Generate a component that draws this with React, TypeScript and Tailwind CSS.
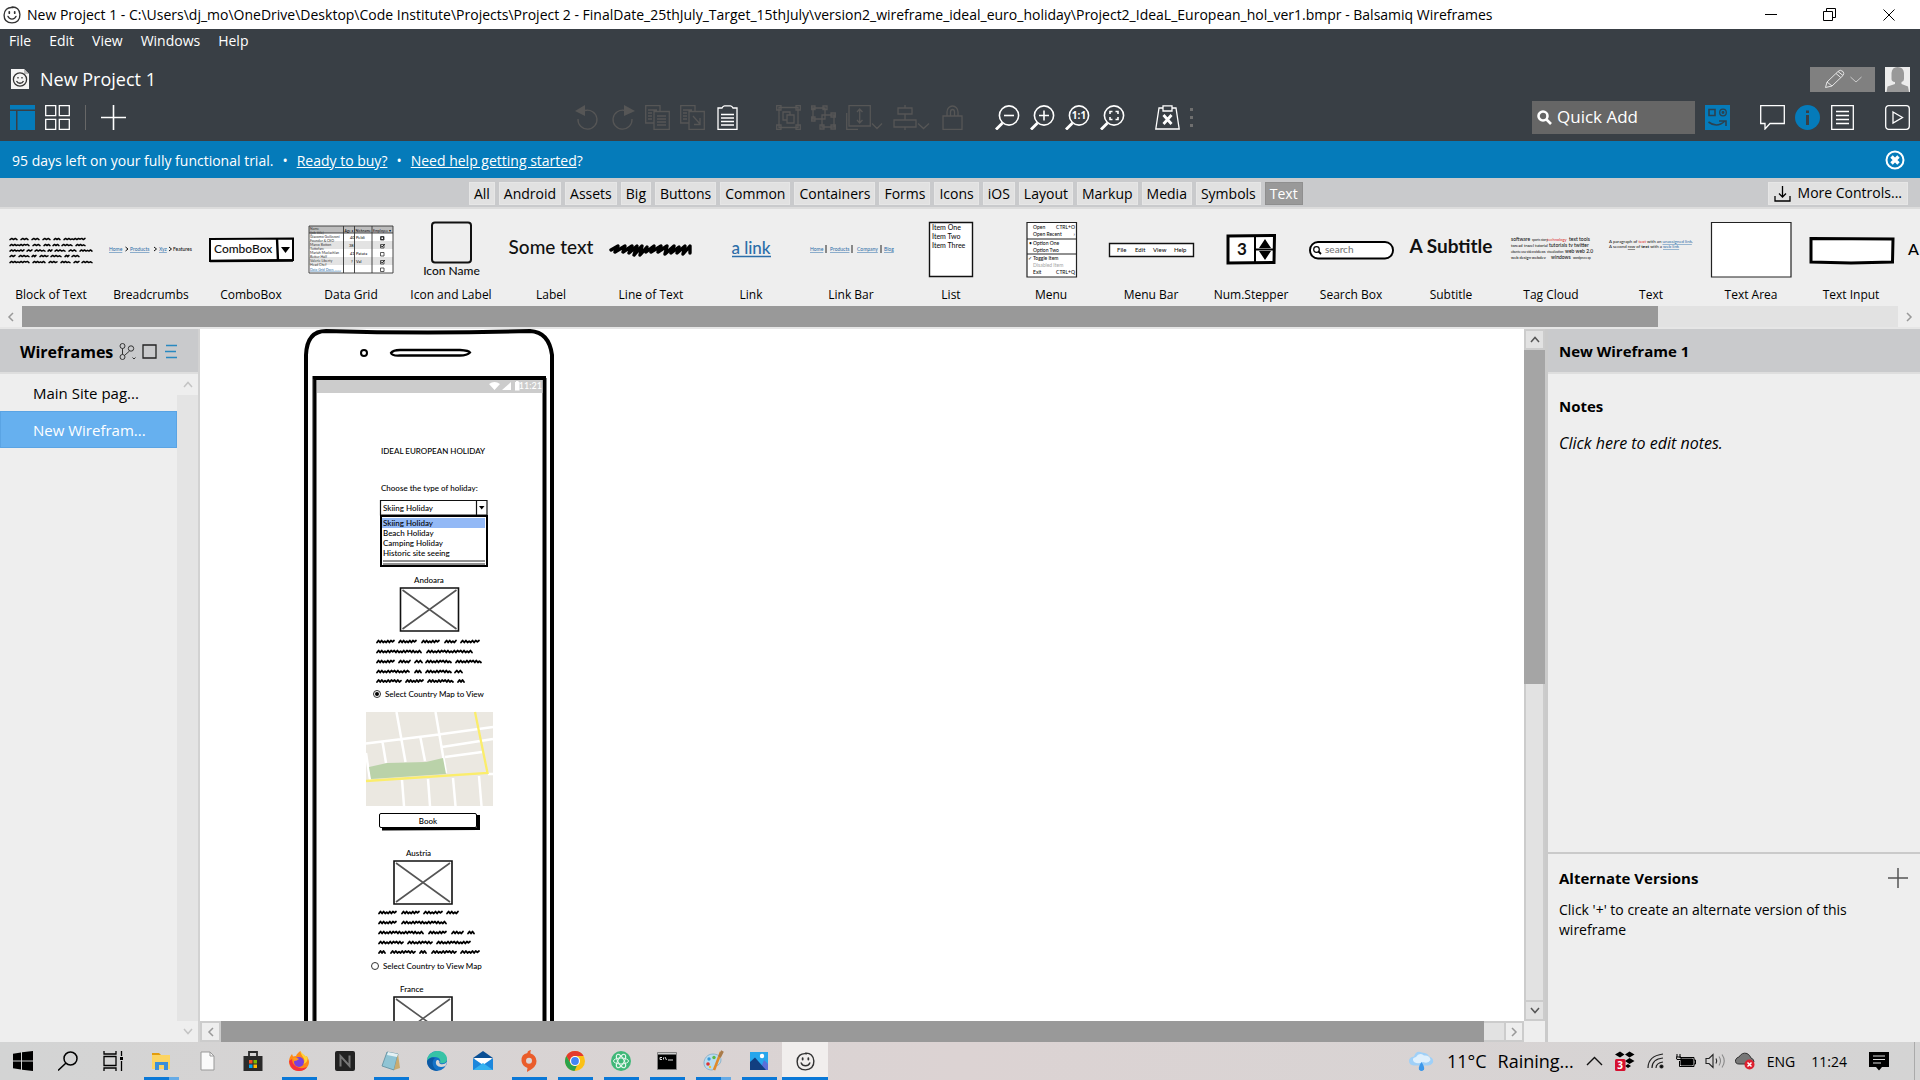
import React from "react";

const SKETCH = "font-['Lato','Liberation_Sans',sans-serif]";

/* ---------- scribbled placeholder text ---------- */

function scribble(x: number, y: number, w: number, a: number) {
  let d = `M${x} ${y + a}`;
  const n = Math.max(3, Math.round(w / 1.6));
  for (let i = 1; i <= n; i++) {
    const k = i % 5 === 0 ? 0.4 : 1;
    d += ` L${(x + (w * i) / n).toFixed(1)} ${(i % 2 ? y - a * k : y + a * k).toFixed(1)}`;
  }
  return d;
}

type Row = { y: number; words: [number, number][] };

function Scribbles({ rows, amp = 1, sw = 1.8 }: { rows: Row[]; amp?: number; sw?: number }) {
  return (
    <g fill="none" stroke="#000" strokeWidth={sw} strokeLinejoin="round" strokeLinecap="round">
      {rows.map((r) =>
        r.words.map(([a, b]) => <path key={`${r.y}-${a}`} d={scribble(a, r.y, b - a, amp)} />),
      )}
    </g>
  );
}

/* ---------- title bar ---------- */

function Smiley({ size = 18, color = "#333" }: { size?: number; color?: string }) {
  return (
    <svg width={size} height={size} viewBox="0 0 20 20" fill="none" stroke={color} strokeWidth="1.5" strokeLinecap="round">
      <path d="M10 1.2C15 .8 18.6 4 18.8 9.500C19 15.500 15.500 18.800 10 18.800C4.500 18.800 1.200 15.500 1.200 10C1.200 4.500 5 1 11 1.800" />
      <path d="M5.500 11.500C7 15.500 13 15.500 14.500 11.500" />
      <path d="M7 6.500V8M13 6.500V8" strokeWidth="1.900" />
    </svg>
  );
}

function TitleBar() {
  return (
    <div className="flex h-[29px] shrink-0 items-center bg-white pl-[3px] text-[14px] text-black">
      <Smiley />
      <span className="ml-[6px] whitespace-nowrap">
        New Project 1 - C:\Users\dj_mo\OneDrive\Desktop\Code Institute\Projects\Project 2 - FinalDate_25thJuly_Target_15thJuly\version2_wireframe_ideal_euro_holiday\Project2_IdeaL_European_hol_ver1.bmpr - Balsamiq Wireframes
      </span>
      <div className="ml-auto flex h-full">
        <button aria-label="Minimise" className="flex w-[58px] items-center justify-center">
          <svg width="12" height="12" stroke="#000"><path d="M0 5.500H12" /></svg>
        </button>
        <button aria-label="Restore" className="flex w-[58px] items-center justify-center">
          <svg width="13" height="13" fill="none" stroke="#000"><path d="M.500 3.500H9.500V12.500H.500ZM3.500 3V.500H12.500V9.500H10" /></svg>
        </button>
        <button aria-label="Close" className="flex w-[62px] items-center justify-center">
          <svg width="12" height="12" stroke="#000"><path d="M.500 .500L11.500 11.500M11.500 .500L.500 11.500" /></svg>
        </button>
      </div>
    </div>
  );
}

/* ---------- dark header ---------- */

function Tool({ label, w = 25, off, children }: { label: string; w?: number; off?: boolean; children: React.ReactNode }) {
  return (
    <button aria-label={label} className={off ? "shrink-0 text-[#565656]" : "shrink-0 text-white"}>
      <svg width={w} height="25" viewBox={`0 0 ${w} 25`} fill="none" stroke="currentColor" strokeWidth="1.300">
        {children}
      </svg>
    </button>
  );
}

function Divider() {
  return <span className="h-[25px] w-px shrink-0 bg-[#676767]" />;
}

function Lens({ children }: { children: React.ReactNode }) {
  return (
    <>
      <circle cx="14" cy="10.500" r="9.600" strokeWidth="1.600" />
      <path d="M7.500 18L1 24.500" strokeWidth="2.800" />
      {children}
    </>
  );
}

function Header() {
  return (
    <header className="shrink-0 bg-[#393f45] text-white">
      <nav className="flex h-[24px] items-center gap-[18px] pb-[2px] pl-[9px] text-[14px]">
        <button>File</button>
        <button>Edit</button>
        <button>View</button>
        <button>Windows</button>
        <button>Help</button>
      </nav>

      <div className="flex h-[50px] items-center pt-[2px] pr-[10px] pl-[11px]">
        <svg width="18" height="20" viewBox="0 0 18 20">
          <path d="M0 0H13L18 5V20H0Z" fill="#f4f4f4" />
          <path d="M13 0V5H18" fill="#bbb" />
          <circle cx="9" cy="10.500" r="6.600" fill="none" stroke="#333" strokeWidth="1.300" />
          <path d="M5.500 12C7 15 11 15 12.500 12M7 8V9.500M11 8V9.500" fill="none" stroke="#333" strokeWidth="1.300" />
        </svg>
        <h1 className="ml-[11px] text-[18px] leading-[24px]">New Project 1</h1>
        <button aria-label="Edit mode" className="ml-auto flex h-[25px] w-[65px] items-center justify-center gap-[5px] bg-[#808080]">
          <svg width="21" height="20" viewBox="0 0 21 20" fill="none" stroke="#e6e6e6">
            <path d="M1.500 18.500L3 13L14 2.500L19 6.500L8 17L1.500 18.500ZM3 13L8 17M12 4.500L16.800 8.500M14 2.500Q16 0 19 2.500Q20.500 4.500 19 6.500" />
          </svg>
          <svg width="12" height="7" viewBox="0 0 12 7" fill="none" stroke="#c9c9c9"><path d="M.500 1L6 6L11.500 1" /></svg>
        </button>
        <svg className="ml-[10px]" width="25" height="25" viewBox="0 0 25 25">
          <path d="M0 0H25V25H0Z" fill="#ececec" />
          <path d="M6.500 12V6Q7 0 12.500 0Q18.500 0 19 6V12Q19 14.500 16.500 15V17L23 19.500L24 25H1.500L2.500 19.500L10 17V15Q6.500 14.500 6.500 12Z" fill="#999" />
        </svg>
      </div>

      <div className="flex h-[38px] items-center pr-[10px] pb-[10px] pl-[10px]">
        <div className="flex flex-1 items-center gap-[10px]">
          <Tool label="Show navigator">
            <path d="M0 0H25V4.500H0ZM0 6H6V25H0ZM7.500 6H25V25H7.500Z" fill="#057bba" stroke="none" />
          </Tool>
          <Tool label="Grid view">
            <path d="M.700 .700H10.700V10.700H.700ZM14.300 .700H24.300V10.700H14.300ZM.700 14.300H10.700V24.300H.700ZM14.300 14.300H24.300V24.300H14.300Z" />
          </Tool>
          <span className="flex items-center gap-[15px] pl-[5px]">
            <Divider />
            <Tool label="Add"><path d="M0 12.500H25M12.500 0V25" strokeWidth="1.600" /></Tool>
          </span>
        </div>

        <div className="mr-[152px] flex items-center gap-[10px]">
          <Tool label="Undo" off>
            <path d="M10 5.500A9.500 9.500 0 1 1 3 14" /><path d="M0 6L10 0V11Z" fill="currentColor" stroke="none" />
          </Tool>
          <Tool label="Redo" off>
            <path d="M15 5.500A9.500 9.500 0 1 0 22 14" /><path d="M25 6L14 0V11Z" fill="currentColor" stroke="none" />
          </Tool>
          <Tool label="Copy" off>
            <path d="M9 18H.700V.700H15V6M9 6.500H24.300V24.300H9ZM3 5H12M3 8H7M3 11H7M3 14H7M12 11H21M12 14H21M12 17H21M12 20H21" />
          </Tool>
          <Tool label="Duplicate" off>
            <path d="M9 18H.700V.700H15V6M9 6.500H24.300V24.300H9ZM3 5H12M3 8H7M3 11H7M3 14H7M13 11L20 19M20 13V19.500H14" />
          </Tool>
          <Tool label="Paste">
            <path d="M3 3H7Q8 .800 9.500 .800H15.500Q17 .800 18 3H22V24.300H3Z" /><path d="M6 9.500H19M6 13H19M6 16.500H19M6 20H19" strokeWidth="1.600" />
          </Tool>
          <span className="px-[8px]"><Divider /></span>
          <Tool label="Group" off>
            <path d="M3 2.500H22V22.500H3ZM.700 .700H5V5H.700ZM20 .700H24.300V5H20ZM.700 20H5V24.300H.700ZM20 20H24.300V24.300H20ZM7 7H14V10H18V18H11V15H7ZM11 15V10H14" />
          </Tool>
          <Tool label="Ungroup" off>
            <path d="M2 3H14V14H2ZM11 10H23V22H11ZM.700 1H4V4.500H.700ZM12 1H16V4.500H12ZM.700 12H4V16H.700ZM20 8H24.300V12H20ZM9 20H13V24H9ZM20 20H24.300V24H20Z" />
          </Tool>
          <Tool label="Arrange" off w={37}>
            <path d="M3 .700H24.300V21H3ZM.700 8V24.300H12M13.700 4V18M11 7L13.700 4L16.500 7M11 15L13.700 18L16.500 15M26 18.500L31 23.500L36 18.500" />
          </Tool>
          <Tool label="Align" off w={37}>
            <path d="M5 3H19V9H5ZM1 15H23V22H1ZM12 0V3M12 9V15M12 22V25M25 18.500L30.500 23.500L36 18.500" />
          </Tool>
          <Tool label="Lock" off>
            <path d="M3 11H22V24.300H3ZM7 11V7A5.500 6 0 0 1 18 7V11M10.500 11V7A2 2.500 0 0 1 14.500 7V11" />
          </Tool>
          <span className="px-[5px]"><Divider /></span>
          <Tool label="Zoom out"><Lens><path d="M9 10.500H19" strokeWidth="1.600" /></Lens></Tool>
          <Tool label="Zoom in"><Lens><path d="M9 10.500H19M14 5.500V15.500" strokeWidth="1.600" /></Lens></Tool>
          <Tool label="Actual size">
            <Lens>
              <text x="14" y="14" textAnchor="middle" className="text-[10px] font-bold" fill="currentColor" stroke="none">1:1</text>
            </Lens>
          </Tool>
          <Tool label="Zoom to fit">
            <Lens><path d="M10 9V6.500H12.500M15.500 6.500H18V9M18 12V14.500H15.500M12.500 14.500H10V12" strokeWidth="1.600" /></Lens>
          </Tool>
          <span className="px-[5px]"><Divider /></span>
          <Tool label="Clear">
            <path d="M8 3H4L.800 24H24.200L21 3H17M8 .800H17V6H8Z" /><path d="M8.500 10L16.500 19M16.500 10L8.500 19" strokeWidth="2.800" />
          </Tool>
          <svg width="3" height="20" fill="#6f6f6f"><path d="M0 1H3V4H0ZM0 9H3V12H0ZM0 17H3V20H0Z" /></svg>
        </div>

        <div className="flex flex-1 items-center justify-end gap-[10px]">
          <label className="flex h-[33px] w-[163px] shrink-0 items-center bg-[#666] pl-[5px]">
            <svg width="15" height="15" viewBox="0 0 15 15" fill="none" stroke="#fff" strokeWidth="2.600">
              <circle cx="6" cy="6" r="4.500" /><path d="M9.500 9.500L14 14" />
            </svg>
            <input aria-label="Quick Add" placeholder="Quick Add" className="ml-[5px] w-[120px] bg-transparent text-[17px] text-white outline-none placeholder:text-white" />
          </label>
          <Tool label="UI library">
            <path d="M0 0H25V25H0Z" fill="#057bba" stroke="none" />
            <g stroke="#2c414f"><path d="M4 4.500H10V10.500H4ZM3.500 17Q12 23.500 20 16M14 16H21V21" strokeWidth="1.600" /><circle cx="18" cy="7.500" r="3.300" /><circle cx="18" cy="7.500" r=".8" /></g>
          </Tool>
          <span className="px-[5px]"><Divider /></span>
          <Tool label="Comments"><path d="M.700 .700H24.300V18.500H10L5 24V18.500H.700Z" /></Tool>
          <Tool label="Properties">
            <circle cx="12.500" cy="12.500" r="12.500" fill="#057bba" stroke="none" />
            <path d="M12.500 10V20M12.500 5.500V8" stroke="#393f45" strokeWidth="3" />
          </Tool>
          <Tool label="Notes"><path d="M1.700 .700H23.300V24.300H1.700ZM6 6.500H19M6 10.500H19M6 14.500H19M6 18.500H19" /></Tool>
          <span className="px-[5px]"><Divider /></span>
          <Tool label="Present"><rect x=".7" y=".7" width="23.600" height="23.600" rx="3" /><path d="M8 7L17.500 12.500L8 18Z" /></Tool>
        </div>
      </div>
    </header>
  );
}

function Banner() {
  return (
    <div className="flex h-[37px] shrink-0 items-center bg-[#057bba] pt-px pr-[15px] pl-[12px] text-[14px] text-white">
      <span>95 days left on your fully functional trial.</span>
      <span className="mx-[9px]">•</span>
      <a href="#buy" className="underline">Ready to buy?</a>
      <span className="mx-[9px]">•</span>
      <a href="#help" className="underline">Need help getting started</a>?
      <button aria-label="Dismiss" className="ml-auto">
        <svg width="20" height="20" viewBox="0 0 20 20" fill="none" stroke="#fff">
          <circle cx="10" cy="10" r="8.500" strokeWidth="2" /><path d="M6.500 6.500L13.500 13.500M13.500 6.500L6.500 13.500" strokeWidth="3.400" />
        </svg>
      </button>
    </div>
  );
}

/* ---------- control gallery ---------- */

const TABS = ["All", "Android", "Assets", "Big", "Buttons", "Common", "Containers", "Forms", "Icons", "iOS", "Layout", "Markup", "Media", "Symbols", "Text"];

function Tabs() {
  return (
    <div className="flex h-[31px] shrink-0 items-center border-b-2 border-[#dcdcdc] bg-[#c9cacc] pt-px pr-[12px] text-[14px] text-black">
      <div className="flex flex-1 justify-center gap-[4px] pl-[4px]">
        {TABS.map((t) => (
          <button
            key={t}
            className={
              t === "Text"
                ? "h-[23px] border border-[#8f8f8f] bg-[#999] px-[4px] leading-[22px] text-white"
                : "h-[23px] border border-[#e6e6e6] bg-[#e1e1e1] px-[4px] leading-[22px]"
            }
          >
            {t}
          </button>
        ))}
      </div>
      <button className="flex h-[23px] items-center gap-[7px] border border-[#e6e6e6] bg-[#e1e1e1] px-[5px] leading-[22px] whitespace-nowrap">
        <svg width="17" height="17" viewBox="0 0 17 17" fill="none" stroke="#000" strokeWidth="1.300">
          <path d="M1 11V16H16V11M8.500 1V11.500M5 8.500L8.500 12L12 8.500" />
        </svg>
        More Controls...
      </button>
    </div>
  );
}

const BLUE = "#2b6da8";

function T({ x, y, s, children, fill = "#111", anchor = "start", bold }: { x: number; y: number; s: number; children: React.ReactNode; fill?: string; anchor?: "start" | "middle" | "end"; bold?: boolean }) {
  return (
    <text x={x} y={y} fontSize={s} fill={fill} textAnchor={anchor} fontWeight={bold ? 700 : 500}>
      {children}
    </text>
  );
}

function Links({ items, y, sep }: { items: [number, string][]; y: number; sep: number[] }) {
  return (
    <>
      {items.map(([x, t]) => (
        <text key={t} x={x} y={y} fontSize="5" fill={BLUE} textDecoration="underline">{t}</text>
      ))}
      <path d={sep.map((x) => `M${x} ${y - 6}V${y + 2}`).join("")} stroke="#222" />
    </>
  );
}

const CONTROLS: { name: string; art: React.ReactNode }[] = [
  {
    name: "Block of Text",
    art: (
      <Scribbles
        sw={1.5}
        amp={0.6}
        rows={[
          { y: 27, words: [[9, 16], [20, 27], [31, 38], [42, 49], [53, 59], [63, 84]] },
          { y: 33, words: [[9, 28], [32, 39], [43, 49], [52, 58], [61, 71], [75, 84]] },
          { y: 38.500, words: [[9, 23], [26, 31], [34, 44], [47, 51], [54, 64], [68, 75], [79, 91]] },
          { y: 44, words: [[9, 14], [18, 28], [31, 35], [39, 47], [50, 60], [64, 68], [71, 78]] },
          { y: 50, words: [[9, 28], [32, 44], [48, 56], [60, 69], [73, 78], [81, 91]] },
        ]}
      />
    ),
  },
  {
    name: "Breadcrumbs",
    art: (
      <>
        <Links y={39} sep={[]} items={[[8, "Home"], [29, "Products"], [58, "Xyz"]]} />
        <T x={72} y={39} s={5}>Features</T>
        <path d="M24.500 35L27 37L24.500 39M53 35L55.500 37L53 39M68 35L70.500 37L68 39" fill="none" stroke="#111" />
      </>
    ),
  },
  {
    name: "ComboBox",
    art: (
      <>
        <path d="M9 27L92 26.500V48L9 49Z" fill="#fff" stroke="#000" strokeWidth="2" />
        <path d="M9 49L92 48.500M76 26.500L77 49" stroke="#000" strokeWidth="2.400" />
        <path d="M80 35H89L84.500 41Z" />
        <T x={13} y={41} s={12}>ComboBox</T>
      </>
    ),
  },
  {
    name: "Data Grid",
    art: (
      <>
        <path d="M8 14H92V61H8Z" fill="#fff" />
        <path d="M8 14H92V21H8ZM8 14H42V21H8Z" fill="#bdbdbd" />
        <path d="M8 29H92V37H8ZM8 45H92V53H8Z" fill="#e3e3e3" />
        <path d="M8 14H92V61H8ZM42.500 14V61M53.500 14V61M71 14V61M8 21H92" fill="none" stroke="#333" strokeWidth=".9" />
        {["Name", "(job title)", "Giacomo Guilizzoni", "Founder & CEO", "Marco Botton", "Tuttofare", "Mariah Maclachlan", "Better Half", "Valerie Liberty", "Head Chef"].map((t, i) => (
          <T key={t} x={9} y={17.500 + i * 4} s={3.500} fill="#444">{t}</T>
        ))}
        <text x="9" y="58.500" fontSize="3.500" fill={BLUE} textDecoration="underline">Data Grid Docs ........</text>
        <T x={43.500} y={19.500} s={3.500}>Age ♦</T>
        <T x={54.500} y={19.500} s={3.500}>Nickname</T>
        <T x={72} y={19.500} s={3.500}>Employee ▾</T>
        <T x={49} y={27} s={4}>40</T><T x={55} y={27} s={4}>Peldi</T>
        <T x={48} y={35} s={4}>38</T>
        <T x={49} y={43} s={4}>41</T><T x={55} y={43} s={4}>Patata</T>
        <T x={50} y={51} s={4}>?</T><T x={55} y={51} s={4}>Val</T>
        <path d="M79.500 24.500H83V28H79.500ZM79.500 32.500H83V36H79.500ZM79.500 40.500H83V44H79.500ZM79.500 48.500H83V52H79.500ZM79.500 56H83V59.500H79.500Z" fill="none" stroke="#333" strokeWidth=".8" />
        <path d="M80 25H82.500V27.500H80ZM80 33.500L81 35L84 32M80 49.500L81 51L84 48" fill="none" stroke="#111" strokeWidth=".8" />
      </>
    ),
  },
  {
    name: "Icon and Label",
    art: (
      <>
        <rect x="31" y="10.500" width="39" height="40" rx="3" fill="none" stroke="#111" strokeWidth="2" />
        <T x={50.500} y={63} s={12} anchor="middle">Icon Name</T>
      </>
    ),
  },
  { name: "Label", art: <T x={50} y={42} s={19} anchor="middle">Some text</T> },
  {
    name: "Line of Text",
    art: (
      <path
        d="M10 38L17 34L14 40L24 34L22 40L31 34L28 41L36 34L33 43L41 34L39 43L46 35L45 40L53 34L50 40L60 34L57 40L66 34L64 42L73 34L70 41L78 35L76 41L84 34L82 42L89 34V41"
        fill="none" stroke="#000" strokeWidth="3.400" strokeLinejoin="round" strokeLinecap="round"
      />
    ),
  },
  {
    name: "Link",
    art: <><T x={50} y={42} s={17} fill={BLUE} anchor="middle">a link</T><path d="M31 44.500H70" stroke={BLUE} strokeWidth="1.500" /></>,
  },
  {
    name: "Link Bar",
    art: <Links y={39} sep={[25, 51, 80]} items={[[9, "Home"], [29, "Products"], [56, "Company"], [83, "Blog"]]} />,
  },
  {
    name: "List",
    art: (
      <>
        <path d="M28.500 10.500H71.500V64.500H28.500Z" fill="#fff" stroke="#111" strokeWidth="1.400" />
        <T x={31} y={17.500} s={7}>Item One</T><T x={31} y={26.500} s={7}>Item Two</T><T x={31} y={35.500} s={7}>Item Three</T>
      </>
    ),
  },
  {
    name: "Menu",
    art: (
      <>
        <path d="M26 10.500H75.500V65H26ZM26 27H75M26 42H75" fill="#fff" stroke="#222" strokeWidth="1.200" />
        <T x={32} y={16.500} s={5}>Open</T><T x={74} y={16.500} s={5} anchor="end">CTRL+O</T>
        <T x={32} y={23.500} s={5}>Open Recent</T><T x={74} y={23.500} s={5} anchor="end">›</T>
        <T x={28} y={32.500} s={5}>•</T><T x={32} y={32.500} s={5}>Option One</T><T x={32} y={39.500} s={5}>Option Two</T>
        <T x={27} y={48} s={5}>✓</T><T x={32} y={48} s={5}>Toggle Item</T><T x={32} y={55} s={5} fill="#aaa">Disabled Item</T>
        <T x={32} y={62} s={5}>Exit</T><T x={74} y={62} s={5} anchor="end">CTRL+Q</T>
      </>
    ),
  },
  {
    name: "Menu Bar",
    art: (
      <>
        <path d="M8.500 31.500H92.500V44.500H8.500Z" fill="#fff" stroke="#111" strokeWidth="1.400" />
        <T x={16} y={40} s={6}>File</T><T x={34} y={40} s={6}>Edit</T><T x={52} y={40} s={6}>View</T><T x={73} y={40} s={6}>Help</T>
      </>
    ),
  },
  {
    name: "Num.Stepper",
    art: (
      <>
        <path d="M27 24L73.500 23.500L73 50.500L27 51Z" fill="#fff" stroke="#000" strokeWidth="3" />
        <path d="M54 24V51M55 37.500H73" stroke="#000" strokeWidth="2" />
        <path d="M58 36L64 27L70 36ZM58 39L64 48L70 39Z" />
        <T x={41} y={43} s={17} anchor="middle" bold>3</T>
      </>
    ),
  },
  {
    name: "Search Box",
    art: (
      <>
        <rect x="9" y="30" width="83" height="16.500" rx="8" fill="#fff" stroke="#000" strokeWidth="1.900" />
        <circle cx="15.500" cy="37.500" r="2.800" fill="none" stroke="#000" strokeWidth="1.200" /><path d="M17.500 39.500L20 42" stroke="#000" strokeWidth="1.800" />
        <T x={24} y={41} s={10} fill="#777">search</T>
      </>
    ),
  },
  { name: "Subtitle", art: <T x={50} y={41} s={19} anchor="middle" bold>A Subtitle</T> },
  {
    name: "Tag Cloud",
    art: (
      <>
        <T x={10} y={29} s={5}>software</T><T x={31} y={29} s={3}>sports story</T><T x={46} y={29} s={4} fill="#d33">technology</T><T x={68} y={29} s={5}>text tools</T>
        <T x={10} y={35} s={4}>toread</T><T x={23} y={35} s={4}>travel tutorial</T><T x={48} y={35} s={5}>tutorials tv twitter</T>
        <T x={10} y={41} s={3}>ubuntu usa video</T><T x={33} y={41} s={4}>videos</T><T x={46} y={41} s={3}>visualization</T><T x={64} y={41} s={5}>web web 2.0</T>
        <T x={10} y={47} s={4}>web design webdev</T><T x={50} y={47} s={5}>windows</T><T x={72} y={47} s={3}>wordpress xp</T>
      </>
    ),
  },
  {
    name: "Text",
    art: (
      <text x="8" y="31" fontSize="4.400" fill="#111">
        A paragraph of <tspan fill="#d22">text</tspan> with an <tspan fill={BLUE} textDecoration="underline">unassigned link</tspan>.
        <tspan x="8" dy="5">A second </tspan><tspan textDecoration="underline">row</tspan> of <tspan fontWeight="700">text</tspan> with a <tspan fill={BLUE} textDecoration="underline">web link</tspan>
      </text>
    ),
  },
  { name: "Text Area", art: <path d="M10.500 10.500H90V65H10.500Z" fill="#fff" stroke="#222" strokeWidth="1.200" /> },
  { name: "Text Input", art: <path d="M10 26.500L92 27L91.500 50L50 51L10 50Z" fill="#fff" stroke="#000" strokeWidth="3" /> },
];

function Gallery() {
  return (
    <div className="shrink-0 bg-[#eee]">
      <div className="flex h-[97px] overflow-hidden pt-[3px] pl-[1px]">
        {CONTROLS.map((c) => (
          <button key={c.name} className="flex w-[100px] shrink-0 flex-col items-center text-[12px] leading-[18px] text-black">
            <svg width="100" height="74" viewBox="0 0 100 74" className={SKETCH}>{c.art}</svg>
            {c.name}
          </button>
        ))}
        <span className={`${SKETCH} mt-[26px] ml-[7px] text-[16px] leading-[22px] font-medium`}>A</span>
      </div>
      <div className="flex h-[21px] bg-[#e2e2e2]">
        <button aria-label="Scroll left" className="flex w-[22px] items-center justify-center bg-[#eee]">
          <Chevron d="M6 1L2 5L6 9" color="#999" />
        </button>
        <span className="w-[85.200%] bg-[#999]" />
        <button aria-label="Scroll right" className="ml-auto flex w-[22px] items-center justify-center bg-[#eee]">
          <Chevron d="M2 1L6 5L2 9" color="#999" />
        </button>
      </div>
      <div className="h-[2px] bg-[#e6e6e6]" />
    </div>
  );
}

function Chevron({ d, color, w = 8, h = 10 }: { d: string; color: string; w?: number; h?: number }) {
  return (
    <svg width={w} height={h} viewBox={`0 0 ${w} ${h}`} fill="none" stroke={color} strokeWidth="1.500"><path d={d} /></svg>
  );
}

/* ---------- left navigator ---------- */

function Navigator() {
  return (
    <aside className="flex w-[200px] shrink-0 flex-col border-r-2 border-[#d2d2d2] bg-[#eee]">
      <div className="flex h-[45px] items-center border-b-2 border-[#dedede] bg-[#c9cacc] pt-[2px] pl-[20px]">
        <h2 className="text-[16px] font-bold text-black">Wireframes</h2>
        <div className="ml-auto flex items-center gap-[6px] pr-[20px]">
          <svg width="17" height="17" viewBox="0 0 17 17" fill="none" stroke="#333">
            <circle cx="3.500" cy="3" r="2.500" /><circle cx="3.500" cy="14" r="2.500" /><circle cx="12" cy="5.500" r="2.700" />
            <path d="M3.500 5.500V11.500M5.500 12.500L10.500 8M13.500 14.500L15 16L16.500 14.500" />
          </svg>
          <svg width="15" height="15" fill="none" stroke="#222" strokeWidth="1.300"><path d="M1 1H14V14H1Z" /></svg>
          <svg className="ml-[2px]" width="13" height="15" stroke="#2889c0" strokeWidth="1.500"><path d="M1 1.500H12M0 7.500H11M1 13.500H12" /></svg>
        </div>
      </div>
      <div className="flex flex-1">
        <div className="flex-1 text-[15px]">
          <button className="flex h-[37px] w-full items-center pt-px pl-[33px] text-black">Main Site pag...</button>
          <button className="flex h-[37px] w-full items-center border border-[#5aa4e4] bg-[#66b0ef] pt-px pl-[32px] text-white">New Wirefram...</button>
        </div>
        <div className="flex w-[21px] flex-col bg-[#e4e4e4]">
          <span className="flex h-[21px] items-center justify-center bg-[#eee]"><Chevron w={10} h={7} d="M1 6L5 1.500L9 6" color="#c4c4c4" /></span>
          <span className="mt-auto flex h-[21px] items-center justify-center bg-[#eee]"><Chevron w={10} h={7} d="M1 1L5 5.500L9 1" color="#c4c4c4" /></span>
        </div>
      </div>
    </aside>
  );
}

/* ---------- phone wireframe on the canvas ---------- */

const ANDORRA: Row[] = [
  { y: 312.500, words: [[73, 90], [95, 112], [118, 135], [141, 152], [157, 175]] },
  { y: 322.500, words: [[73, 117], [123, 168]] },
  { y: 332.500, words: [[73, 90], [95, 106], [111, 118], [122, 147], [152, 177]] },
  { y: 342.500, words: [[73, 105], [111, 117], [122, 147], [151, 158]] },
  { y: 352, words: [[73, 97], [102, 119], [124, 149], [154, 160]] },
];
const AUSTRIA: Row[] = [
  { y: 583.500, words: [[75, 92], [98, 115], [120, 138], [143, 154]] },
  { y: 593.500, words: [[75, 92], [98, 142]] },
  { y: 603.500, words: [[75, 119], [125, 142], [148, 159], [164, 170]] },
  { y: 613.500, words: [[75, 99], [104, 128], [133, 166]] },
  { y: 623, words: [[75, 81], [87, 111], [116, 122], [128, 152], [157, 175]] },
];

function Picture({ x, y }: { x: number; y: number }) {
  return (
    <g fill="none">
      <path d={`M${x} ${y}h58v43h-58Z`} stroke="#111" strokeWidth="1.600" />
      <path d={`M${x + 2} ${y + 2}l54 39M${x + 56} ${y + 2}l-54 39`} stroke="#555" strokeWidth="1.600" />
    </g>
  );
}

function Phone() {
  return (
    <div className={`${SKETCH} absolute top-0 left-[104px] h-[740px] w-[250px] text-[8px] leading-[10px] font-medium whitespace-nowrap text-black`}>
      <svg className="absolute inset-0" width="250" height="740" viewBox="0 0 250 740" fill="none">
        <path d="M2 760V26Q3 2 22 2Q124 5 226 2Q245 3 248 26V760" stroke="#000" strokeWidth="4" />
        <path d="M10.500 49V760M240.500 49V760M8.500 49H242" stroke="#000" strokeWidth="4" />
        <path d="M8.700 50V760" stroke="#888" />
        <circle cx="60" cy="24" r="3" stroke="#000" strokeWidth="2" />
        <path d="M87 24Q89 21 96 21H156Q165 21.500 166 23.500Q163 26.500 156 26.500H96Q88 27 87 24Z" stroke="#000" strokeWidth="2.300" />
        <path d="M13 51H238.500V64H13Z" fill="#ccc" />
        <path d="M185 55Q190.500 51 196 55L190.500 61ZM198 61L207 53V61ZM211 53H212V52H214.500V53H215.500V61.500H211Z" fill="#fff" />

        <path d="M76.500 171.500H183V186H76.500ZM172.500 171.500V186" fill="#fff" stroke="#111" strokeWidth="1.200" />
        <path d="M175 177H180.500L177.700 180.500Z" fill="#000" />
        <path d="M77 187H183V237H77Z" fill="#fff" stroke="#000" strokeWidth="2" />
        <path d="M78 189H181V199H78Z" fill="#93b9f6" />
        <path d="M79 232H181M79 235H181" stroke="#222" />

        <Picture x={96.500} y={259} />
        <Picture x={90} y={532} />
        <Picture x={90} y={668} />
        <Scribbles rows={ANDORRA} />
        <Scribbles rows={AUSTRIA} />

        <path d="M62 383H189V477H62Z" fill="#ebe8e1" />
        <g stroke="#fff" strokeWidth="2.500">
          <path d="M62 414.500L131 406L189 398M92.500 383L101.500 433M131.500 383L142 444M78.500 413L82 434M116.500 409L121 432M138 418L189 410M141 428L178 423M184 445H189M62 424L66 451M98 451L100 477M124 450L126 477M149 449L151.500 477M175 447L177.500 477" />
        </g>
        <path d="M65 438L83 434L122 433L139 429L142 445L67 450Z" fill="#bad2a9" />
        <path d="M62 452L183.500 444L171 383" stroke="#fbed6b" strokeWidth="2.300" />
        <path d="M78 500L174.500 499.500V486" stroke="#000" strokeWidth="3" />
      </svg>

      <span className="absolute top-[51px] right-[12px] text-[9px] leading-[12px] text-white">11:21</span>
      <p className="absolute top-[117px] left-[77px]">IDEAL EUROPEAN HOLIDAY</p>
      <label htmlFor="holiday" className="absolute top-[154px] left-[77px]">Choose the type of holiday:</label>
      <select id="holiday" className="absolute top-[173px] left-[79px] h-[12px] w-[92px] appearance-none leading-[10px]">
        <option>Skiing Holiday</option>
      </select>
      <ul className="absolute top-[189px] left-[79px]">
        <li>Skiing Holiday</li>
        <li>Beach Holiday</li>
        <li>Camping Holiday</li>
        <li>Historic site seeing</li>
      </ul>
      <p className="absolute top-[246px] left-[110px]">Andoara</p>
      <label className="absolute top-[360px] left-[69px] flex items-center gap-[4px]">
        <input type="radio" name="map" defaultChecked className="size-[8px] appearance-none rounded-full border border-[#333] bg-white p-px checked:bg-black checked:bg-clip-content" />
        Select Country Map to View
      </label>
      <button className="absolute top-[484px] left-[75px] h-[15px] w-[98px] rounded-[2px] border border-black bg-white">Book</button>
      <p className="absolute top-[519px] left-[102px]">Austria</p>
      <label className="absolute top-[632px] left-[67px] flex items-center gap-[4px]">
        <input type="radio" name="map" className="size-[8px] appearance-none rounded-full border border-[#333] bg-white" />
        Select Country to View Map
      </label>
      <p className="absolute top-[655px] left-[96px]">France</p>
    </div>
  );
}

function Canvas() {
  return (
    <main className="flex min-w-0 flex-1 flex-col bg-[#eee]">
      <div className="flex min-h-0 flex-1">
        <div className="relative flex-1 overflow-hidden bg-white"><Phone /></div>
        <div className="flex w-[21px] flex-col bg-[#e2e2e2]">
          <button aria-label="Scroll up" className="flex h-[21px] items-center justify-center border-2 border-[#ccc]"><Chevron w={10} h={7} d="M1 6L5 1.500L9 6" color="#555" /></button>
          <span className="h-[48.300%] bg-[#a5a5a5]" />
          <span className="flex-1 border-x-2 border-[#ccc]" />
          <button aria-label="Scroll down" className="flex h-[21px] items-center justify-center border-2 border-[#ccc]"><Chevron w={10} h={7} d="M1 1L5 5.500L9 1" color="#555" /></button>
        </div>
      </div>
      <div className="flex h-[21px] shrink-0 pr-[21px]">
        <button aria-label="Scroll left" className="flex w-[21px] items-center justify-center border-2 border-[#ccc]"><Chevron d="M6 1L2 5L6 9" color="#999" /></button>
        <span className="flex-1 bg-[#999]" />
        <span className="w-[20px] border-y-2 border-[#ccc] bg-[#e2e2e2]" />
        <button aria-label="Scroll right" className="flex w-[20px] items-center justify-center border-2 border-[#ccc]"><Chevron d="M2 1L6 5L2 9" color="#999" /></button>
      </div>
    </main>
  );
}

function Inspector() {
  return (
    <aside className="flex w-[375px] shrink-0 flex-col border-l-3 border-[#cacaca] bg-[#eee] text-black">
      <div className="flex h-[45px] items-center border-b-2 border-[#dedede] bg-[#c9cacc] pt-[2px] pl-[11px]">
        <h2 className="text-[15px] font-bold">New Wireframe 1</h2>
      </div>
      <section className="flex-1 pt-[21px] pl-[11px]">
        <h3 className="text-[15px] leading-[22px] font-bold">Notes</h3>
        <p className="mt-[14px] text-[16px] leading-[24px] italic">Click here to edit notes.</p>
      </section>
      <section className="h-[190px] border-t-2 border-[#cacaca] pt-[13px] pl-[11px]">
        <div className="flex items-center justify-between pr-[12px]">
          <h3 className="text-[15px] leading-[22px] font-bold">Alternate Versions</h3>
          <button aria-label="Add alternate version" className="pb-px"><svg width="20" height="20" stroke="#555" strokeWidth="1.500"><path d="M0 10H20M10 0V20" /></svg></button>
        </div>
        <p className="mt-[11px] w-[320px] text-[14px] leading-[20px]">Click '+' to create an alternate version of this wireframe</p>
      </section>
    </aside>
  );
}

/* ---------- taskbar ---------- */

const S = ({ children }: { children: React.ReactNode }) => (
  <svg width="22" height="22" viewBox="0 0 22 22" fill="none">{children}</svg>
);

const APPS: { name: string; run?: "on" | "multi" | "active"; icon: React.ReactNode }[] = [
  {
    name: "File Explorer", run: "multi",
    icon: <S><path d="M2 3H9L11 5V8H2Z" fill="#e39c0c" /><path d="M2 5H20V19H2Z" fill="#fcd462" /><path d="M5 12H18V20H14V15H9V20H5Z" fill="#3a8fd9" /></S>,
  },
  { name: "Document", icon: <S><path d="M5 2H14L18 6V20H5Z" fill="#fafafa" stroke="#999" /><path d="M14 2V6H18" stroke="#999" /></S> },
  {
    name: "Store",
    icon: <S><path d="M7 6V2H15V6" stroke="#2a2a2a" strokeWidth="1.800" /><path d="M1.500 6H20.500V21H1.500Z" fill="#2a2a2a" /><path d="M7 10H10.500V13.500H7Z" fill="#f25022" /><path d="M11.500 10H15V13.500H11.500Z" fill="#7fba00" /><path d="M7 14.500H10.500V18H7Z" fill="#00a4ef" /><path d="M11.500 14.500H15V18H11.500Z" fill="#ffb900" /></S>,
  },
  {
    name: "Firefox", run: "on",
    icon: (
      <S>
        <path d="M11 21C5 21 1 17 1 11.500C1 8 2.500 6 4 4L5 6.500L8 6C9 3.500 11 2 12.500 1C13 4 17 5 17.500 7L18.500 6C20 8 21 10 21 12C21 17 16.500 21 11 21Z" fill="#ff8a16" />
        <path d="M1 11C2 17 5 21 11 21C14.500 21 17.500 19.500 19 17C13 20 4 17 4 9Z" fill="#f5303f" />
        <circle cx="11" cy="12" r="5" fill="#7a3fdc" />
        <path d="M12.500 1C12 6 19 8 15.500 14C21 12 20 6 18.500 6L17.500 7C17 4.500 13.500 4 12.500 1Z" fill="#ffd335" />
        <path d="M5 8Q8 7 11 9Q9 11 6 11Z" fill="#ff9a20" />
      </S>
    ),
  },
  { name: "Notion", icon: <S><rect x="1" y="1" width="20" height="20" rx="2" fill="#222" /><path d="M6.500 16.500V6L15.500 16V5.500" stroke="#777" strokeWidth="2" /></S> },
  { name: "Notepad", run: "on", icon: <S><path d="M7 2L18 4L14 20L2 16Z" fill="#8fc4d4" stroke="#5d8c9c" strokeWidth=".8" /><path d="M18 4L20 18L14 20Z" fill="#c9ab6f" /><path d="M8 2L18 4L17 7L7 5Z" fill="#e4f1f4" /></S> },
  {
    name: "Edge",
    icon: <S><circle cx="11" cy="11" r="10" fill="#1673c8" /><path d="M1 10C2 3 8 1 12 1C18 1 21 5.500 21 9C21 13 17 14 14 13C15 11 14 7 9 7C5 7 2 9 1 12Z" fill="#37c3a6" /><path d="M9 8C5 11 6 18 12 21C5 21 1 17 1 11Q4 6 9 8Z" fill="#0c59a4" /><path d="M21 12Q18 15 14.500 14Q12.500 13 13.500 11.500Q13 9.500 11 10Q9 12 10.500 15Q13.500 18.500 19.500 16Z" fill="#d8d6d6" /></S>,
  },
  { name: "Mail", icon: <S><path d="M1 8L11 1L21 8Z" fill="#0a4f94" /><path d="M3 8H19V15H3Z" fill="#fff" /><path d="M1 8L11 15L21 8V20H1Z" fill="#1d87dc" /><path d="M1 20L11 13L21 20Z" fill="#35b2f0" /></S> },
  { name: "Origin", run: "on", icon: <S><path d="M13 0Q9 1 9.500 3Q3 4 3.500 11Q4 16 9.500 18Q9 20 9 22Q19 17 18.500 11Q18 5 12.500 3.500Q12 2 13 0Z" fill="#ea5c2a" /><circle cx="11" cy="10.800" r="3" fill="#ddd5d5" /></S> },
  {
    name: "Chrome", run: "on",
    icon: <S><circle cx="11" cy="11" r="10" fill="#fbc116" /><path d="M2.300 6A10 10 0 0 1 19.700 6H11A5 5 0 0 0 6.700 13.500Z" fill="#e33b2e" /><path d="M2.300 6L6.700 13.500A5 5 0 0 0 13 15.500L10.500 21A10 10 0 0 1 2.300 6Z" fill="#2ba24c" /><circle cx="11" cy="11" r="5" fill="#fff" /><circle cx="11" cy="11" r="3.900" fill="#4285f4" /></S>,
  },
  {
    name: "Atom", run: "on",
    icon: <S><circle cx="11" cy="11" r="10" fill="#3fb878" /><g stroke="#e6f7ee" strokeWidth="1"><ellipse cx="11" cy="11" rx="7.500" ry="3" /><ellipse cx="11" cy="11" rx="7.500" ry="3" transform="rotate(60 11 11)" /><ellipse cx="11" cy="11" rx="7.500" ry="3" transform="rotate(120 11 11)" /></g></S>,
  },
  {
    name: "Command Prompt", run: "on",
    icon: <S><path d="M1.500 2.500H20.500V19.500H1.500Z" fill="#000" stroke="#888" strokeWidth=".8" /><path d="M2 3H20V4.500H2Z" fill="#ccc" /><path d="M4 7.500H6M4 7.500V9.500H6M7.500 7.500V9.500M9 7L10.500 10M12 10H17" stroke="#ddd" /></S>,
  },
  {
    name: "Paint", run: "multi",
    icon: <S><path d="M11 4C5 4 2 9 2 13C2 18 6 20 10 20C13 20 12 17 14 16C17 15 19 13 19 10C19 6 15 4 11 4Z" fill="#b9dcf0" stroke="#7fa9c4" strokeWidth=".8" /><circle cx="6" cy="14" r="1.800" fill="#d33" /><circle cx="7" cy="9" r="1.700" fill="#3a9ad9" /><circle cx="12" cy="7.500" r="1.700" fill="#5cb946" /><circle cx="8" cy="17" r="1.200" fill="#f4c430" /><path d="M19 2L12 20" stroke="#e08a2c" strokeWidth="2.600" /><path d="M20.500 1L17.500 7" stroke="#a97b4a" strokeWidth="3" /></S>,
  },
  { name: "Photos", run: "on", icon: <S><path d="M2 2H20V20H2Z" fill="#27a6ec" /><path d="M12 20L16 10L20 14V20Z" fill="#5a6fd8" /><path d="M2 20V12L7 7.500L18 20Z" fill="#123f80" /><circle cx="14" cy="6" r="2.200" fill="#fff" /></S> },
  { name: "Balsamiq Wireframes", run: "active", icon: <Smiley size={19} /> },
];

function Taskbar() {
  return (
    <footer className="flex h-[38px] shrink-0 items-stretch bg-linear-to-r from-[#d3d4d4] via-[#dcd3d3] to-[#d4d4d4] text-black">
      <button aria-label="Start" className="flex w-[45px] items-center justify-center">
        <svg width="20" height="20" viewBox="0 0 20 20"><path d="M0 2.800L8 1.500V9.500H0ZM9 1.300L20 0V9.500H9ZM0 10.500H8V18.500L0 17.300ZM9 10.500H20V20L9 18.700Z" /></svg>
      </button>
      <button aria-label="Search" className="flex w-[45px] items-center justify-center">
        <svg width="20" height="20" viewBox="0 0 20 20" fill="none" stroke="#000" strokeWidth="1.500"><circle cx="12.500" cy="7.500" r="6.500" /><path d="M8 12L0 19.500" /></svg>
      </button>
      <button aria-label="Task View" className="mr-[3px] flex w-[45px] items-center justify-center">
        <svg width="20" height="20" viewBox="0 0 20 20" fill="none" stroke="#000" strokeWidth="1.300"><path d="M1 5.500H13V14.500H1ZM1 0V3H13V0M1 20V17H13V20M18.500 0V5M18.500 10V20" /><path d="M17 6H20V9H17Z" fill="#000" stroke="none" /></svg>
      </button>
      {APPS.map((a) => (
        <button key={a.name} aria-label={a.name} className={a.run === "active" ? "flex w-[46px] flex-col items-center bg-[#f1eeed]" : "flex w-[46px] flex-col items-center"}>
          <span className="flex flex-1 items-center pt-[3px]">{a.icon}</span>
          {a.run === "active" && <span className="h-[3px] w-full bg-[#0a78d7]" />}
          {a.run === "on" && <span className="h-[3px] w-[35px] bg-[#0a78d7]" />}
          {a.run === "multi" && <span className="h-[3px] w-[35px] border-r-10 border-[#66abe6] bg-[#0a78d7]" />}
          {!a.run && <span className="h-[3px]" />}
        </button>
      ))}
      <div className="ml-auto flex items-center gap-[12px] pr-[5px] text-[14px]">
        <button className="flex items-center gap-[13px] pt-px text-[18px]">
          <svg width="26" height="22" viewBox="0 0 26 22"><path d="M6 14.500Q1 14 1 10Q1 6 6 5.500Q8 -1 14 1.500Q20 2 21 5.500Q26 7 25 11.500Q23 15 19 14.500H6Z" fill="#9fd0f8" /><path d="M6 11Q3 7 8 6Q11 1 16 4.500Q22 4 22.500 9Q20 13 15 11Q10 13.500 6 11Z" fill="#dff0fd" /><path d="M13.500 11Q17 16 16 18.500Q13.500 21.500 11 18.500Q10 16 13.500 11Z" fill="#3d98ea" /></svg>
          <span className="flex gap-[11px]"><span>11°C</span><span>Raining...</span></span>
        </button>
        <svg width="17" height="10" viewBox="0 0 17 10" fill="none" stroke="#111" strokeWidth="1.400"><path d="M1 9L8.500 1.500L16 9" /></svg>
        <svg width="20" height="20" viewBox="0 0 20 20">
          <path d="M0 3.500L5 .500L9.500 3.500L5 6.500ZM10 3.500L14.500 .500L19.500 3.500L14.500 6.500ZM10 10L14.500 7L19.500 10L14.500 13ZM10 15L13 13L16 15L13 17Z" />
          <rect y="8" width="10.500" height="12" rx="1.500" fill="#d6102f" /><text x="5.200" y="18" textAnchor="middle" fontSize="10" fontWeight="700" fill="#fff">3</text>
        </svg>
        <svg width="17" height="16" viewBox="0 0 17 16" fill="none" stroke="#222" strokeWidth="1.200"><path d="M1 15Q1 3 16 1M5 15Q5 6 16 5M9 15Q9 10 16 9" /><circle cx="14.500" cy="13.500" r="1.500" fill="#000" /></svg>
        <div className="flex items-center gap-[9px]">
          <svg width="20" height="14" viewBox="0 0 20 14" fill="none" stroke="#000"><path d="M3.500 3.500H18V12.500H3.500V7M1 0V3M4 0V3M0 3H5V5.500H1ZM18 6H19.500V10H18" /><path d="M5 5H16.500V11H5Z" fill="#000" /></svg>
          <svg width="21" height="16" viewBox="0 0 21 16" fill="none" stroke="#222" strokeWidth="1.100"><path d="M1 5.500H4L8 1.500V14.500L4 10.500H1ZM11 5.500Q12.500 8 11 10.500" /><path d="M14 3.500Q17 8 14 12.500M17 1.500Q21.500 8 17 14.500" stroke="#888" /></svg>
          <svg width="20" height="18" viewBox="0 0 20 18"><path d="M4 12Q0 12 .500 8Q2 5 4 5Q7 0 12 1.500Q15 3 16 6Q19 7 19 10L17 12Z" fill="#777" stroke="#333" /><circle cx="14.500" cy="12.500" r="5" fill="#dd2130" /><path d="M12.500 10.500L16.500 14.500M16.500 10.500L12.500 14.500" stroke="#fff" strokeWidth="1.500" /></svg>
        </div>
        <span>ENG</span>
        <time className="ml-[4px]">11:24</time>
        <svg className="mr-[13px] ml-[10px]" width="20" height="20" viewBox="0 0 20 20"><path d="M0 1H20V16H13L10 19.500L7 16H0Z" /><path d="M4 5H16M4 8.500H16M4 12H12" stroke="#ddd" /></svg>
        <span className="h-[38px] w-px bg-[#aaa]" />
      </div>
    </footer>
  );
}

export default function App() {
  return (
    <div className="flex h-screen flex-col overflow-hidden font-['Open_Sans','Noto_Sans',sans-serif]">
      <TitleBar />
      <Header />
      <Banner />
      <Tabs />
      <Gallery />
      <div className="flex min-h-0 flex-1">
        <Navigator />
        <Canvas />
        <Inspector />
      </div>
      <Taskbar />
    </div>
  );
}
